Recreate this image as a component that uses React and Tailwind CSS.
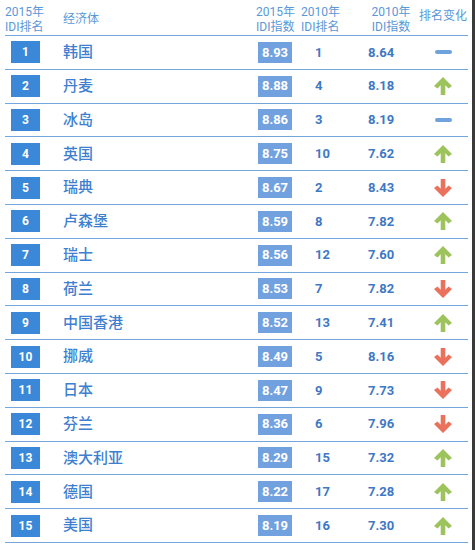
import React from "react";

const rows = [
  { rank: 1, name: "韩国", score: "8.93", rank10: "1", idi10: "8.64", change: "same" },
  { rank: 2, name: "丹麦", score: "8.88", rank10: "4", idi10: "8.18", change: "up" },
  { rank: 3, name: "冰岛", score: "8.86", rank10: "3", idi10: "8.19", change: "same" },
  { rank: 4, name: "英国", score: "8.75", rank10: "10", idi10: "7.62", change: "up" },
  { rank: 5, name: "瑞典", score: "8.67", rank10: "2", idi10: "8.43", change: "down" },
  { rank: 6, name: "卢森堡", score: "8.59", rank10: "8", idi10: "7.82", change: "up" },
  { rank: 7, name: "瑞士", score: "8.56", rank10: "12", idi10: "7.60", change: "up" },
  { rank: 8, name: "荷兰", score: "8.53", rank10: "7", idi10: "7.82", change: "down" },
  { rank: 9, name: "中国香港", score: "8.52", rank10: "13", idi10: "7.41", change: "up" },
  { rank: 10, name: "挪威", score: "8.49", rank10: "5", idi10: "8.16", change: "down" },
  { rank: 11, name: "日本", score: "8.47", rank10: "9", idi10: "7.73", change: "down" },
  { rank: 12, name: "芬兰", score: "8.36", rank10: "6", idi10: "7.96", change: "down" },
  { rank: 13, name: "澳大利亚", score: "8.29", rank10: "15", idi10: "7.32", change: "up" },
  { rank: 14, name: "德国", score: "8.22", rank10: "17", idi10: "7.28", change: "up" },
  { rank: 15, name: "美国", score: "8.19", rank10: "16", idi10: "7.30", change: "up" },
];

const ChangeIcon = ({ change }) => {
  if (change === "same") {
    return <div className="w-[17px] h-[4px] rounded-[2px] bg-[#6ea3dc]" />;
  }
  const color = change === "up" ? "#9cc35c" : "#ea715b";
  return (
    <svg width="20" height="20" viewBox="0 0 20 20" className={change === "down" ? "rotate-180" : ""}>
      <path d="M10 1 L19 10 L15.5 12.5 L12.3 9.2 L12.3 19 L7.7 19 L7.7 9.2 L4.5 12.5 L1 10 Z" fill={color} />
    </svg>
  );
};

export default function App() {
  return (
    <div
      className="w-[475px] h-[550px] bg-white border-r-[3px] border-[#3a3a3a] overflow-hidden"
      style={{ fontFamily: "Roboto, 'Noto Sans CJK SC', sans-serif" }}
    >
      <div className="ml-[5px] w-[463px]">
        {/* header */}
        <div className="flex h-[36px] text-[12px] leading-[15px] text-[#5a98d8] border-b border-[#74a6dc] whitespace-nowrap">
          <div className="w-[58px] pt-[5px]">
            <div>2015年</div>
            <div>IDI排名</div>
          </div>
          <div className="w-[193px] pt-[12px]">经济体</div>
          <div className="w-[45px] pt-[5px]">
            <div>2015年</div>
            <div>IDI指数</div>
          </div>
          <div className="w-[62px] pt-[5px]">
            <div>2010年</div>
            <div>IDI排名</div>
          </div>
          <div className="w-[56px] pt-[5px] text-center">
            <div>2010年</div>
            <div>IDI指数</div>
          </div>
          <div className="flex-1 pt-[9px]">排名变化</div>
        </div>
        {rows.map((r) => (
          <div key={r.rank} className="flex items-center h-[33.8px] border-b border-[#74a6dc]">
            <div className="w-[58px] pl-[6px]">
              <div className="w-[29px] h-[22px] bg-[#3b88d8] text-white text-[12px] font-bold flex items-center justify-center">
                {r.rank}
              </div>
            </div>
            <div className="w-[195px] text-[15px] font-medium text-[#3f7fcf]">{r.name}</div>
            <div className="w-[34px] h-[21px] bg-[#72a1e0] text-white text-[13px] font-bold flex items-center justify-center">
              {r.score}
            </div>
            <div className="w-[76px] pl-[23px] text-[13px] font-bold text-[#3f78c4]">{r.rank10}</div>
            <div className="w-[62px] text-[13px] font-bold text-[#3f78c4]">{r.idi10}</div>
            <div className="w-[26px] flex justify-center items-center">
              <ChangeIcon change={r.change} />
            </div>
          </div>
        ))}
      </div>
    </div>
  );
}
